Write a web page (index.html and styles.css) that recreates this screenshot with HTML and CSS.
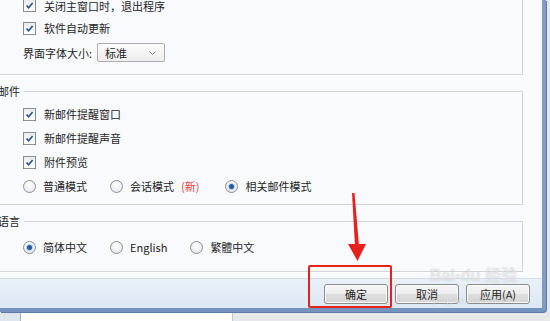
FILE: index.html
```html
<!DOCTYPE html>
<html lang="zh-CN">
<head>
    <meta charset="UTF-8">
    <title>设置</title>
    <link rel="stylesheet" href="styles.css">
</head>
<body>

    <div class="dialog">
        <div class="content">
            <!-- 常规 -->
            <div class="group group-top">
                <div class="row">
                    <span class="check"><svg viewBox="0 0 11 11"><path d="M2.5 5.5 L4.6 7.8 L8.6 3"/></svg></span>
                    <span>关闭主窗口时，退出程序</span>
                </div>
                <div class="row">
                    <span class="check"><svg viewBox="0 0 11 11"><path d="M2.5 5.5 L4.6 7.8 L8.6 3"/></svg></span>
                    <span>软件自动更新</span>
                </div>
                <div class="row row-select">
                    <span>界面字体大小:</span>
                    <span class="select">标准<svg viewBox="0 0 7 4"><path d="M0.5 0.5 L3.5 3.5 L6.5 0.5"/></svg></span>
                </div>
            </div>

            <!-- 邮件 -->
            <fieldset class="group group-mail">
                <legend>邮件</legend>
                <div class="row">
                    <span class="check"><svg viewBox="0 0 11 11"><path d="M2.5 5.5 L4.6 7.8 L8.6 3"/></svg></span>
                    <span>新邮件提醒窗口</span>
                </div>
                <div class="row">
                    <span class="check"><svg viewBox="0 0 11 11"><path d="M2.5 5.5 L4.6 7.8 L8.6 3"/></svg></span>
                    <span>新邮件提醒声音</span>
                </div>
                <div class="row">
                    <span class="check"><svg viewBox="0 0 11 11"><path d="M2.5 5.5 L4.6 7.8 L8.6 3"/></svg></span>
                    <span>附件预览</span>
                </div>
                <div class="row options">
                    <span class="opt"><span class="radio"></span>普通模式</span>
                    <span class="opt opt-wide"><span class="radio"></span>会话模式<span class="new">(新)</span></span>
                    <span class="opt"><span class="radio on"></span>相关邮件模式</span>
                </div>
            </fieldset>

            <!-- 语言 -->
            <fieldset class="group group-lang">
                <legend>语言</legend>
                <div class="row options">
                    <span class="opt"><span class="radio on"></span>简体中文</span>
                    <span class="opt"><span class="radio"></span>English</span>
                    <span class="opt"><span class="radio"></span>繁體中文</span>
                </div>
            </fieldset>
        </div>

        <div class="button-bar">
            <button class="btn">确定</button>
            <button class="btn">取消</button>
            <button class="btn">应用(A)</button>
        </div>

        <!-- 标注 -->
        <div class="callout"></div>
        <svg class="arrow" viewBox="0 0 30 80">
            <polygon points="12,8 14.5,8 19,61 15,61"/>
            <polygon points="8,59 26,59 17.5,76"/>
        </svg>
        <div class="watermark">
            <span class="wm-logo">Bai<span class="paw">●</span>du 经验</span>
            <span class="wm-url">jingyan.baidu.com</span>
        </div>
    </div>

    <div class="under">
        <span class="under-tab"></span>
        <span class="under-page"></span>
    </div>

</body>
</html>
```

FILE: styles.css
```css
body {
    margin: 0;
    background-color: #e7e8ea;
    font-family: "Noto Sans CJK SC", "Noto Sans", sans-serif;
    font-size: 11px;
    color: #1e1e1e;
    overflow: hidden;
    width: 550px;
    height: 321px;
}

.dialog {
    position: relative;
    width: 542px;
    height: 308px;
    display: flex;
    flex-direction: column;
    background-color: #f8fafe;
    border-right: 4px solid #7f9dc4;
    border-bottom: 4px solid #7494bc;
    border-bottom-right-radius: 4px;
    box-shadow: 1px 1px 0 #5c7aa3;
}

.content {
    flex: 1;
    padding-right: 19px;
}

.group {
    margin: 0 0 0 -12px;
    padding: 0 0 0 34px;
    border: 1px solid #d4d4d4;
    box-shadow: 0 1px 0 #ffffff;
    min-width: 0;
}

.group legend {
    padding: 0 4px;
    margin-left: -29px;
    line-height: 16px;
}

.group-top {
    margin-top: -6px;
    border-top: none;
    padding-bottom: 9px;
}

.group-mail {
    margin-top: 8px;
    padding-top: 3px;
    padding-bottom: 6px;
}

.group-lang {
    margin-top: 8px;
    padding-top: 6px;
    padding-bottom: 12px;
}

.row {
    display: flex;
    align-items: center;
    height: 24px;
}

.group-top .row {
    height: 22px;
}

.group-top .row:first-child {
    height: 23px;
}

.group-top .row-select {
    height: 25px;
    padding-top: 1px;
}

.check {
    width: 11px;
    height: 11px;
    border: 1px solid #8a8e94;
    background: linear-gradient(#e9ebee, #ffffff);
    margin-right: 8px;
    display: inline-flex;
}

.check svg {
    width: 11px;
    height: 11px;
    fill: none;
    stroke: #24518e;
    stroke-width: 1.6;
}

.select {
    display: inline-flex;
    align-items: center;
    justify-content: space-between;
    box-sizing: border-box;
    width: 68px;
    height: 19px;
    margin-left: 5px;
    padding: 0 8px 0 7px;
    border: 1px solid #adadad;
    border-radius: 2px;
    background: linear-gradient(#fbfbfb, #eeeeee);
}

.select svg {
    width: 7px;
    height: 4px;
    fill: none;
    stroke: #7a7a7a;
    stroke-width: 1;
}

.options {
    gap: 23px;
}

.opt {
    display: inline-flex;
    align-items: center;
}

.opt-wide {
    margin-right: 3px;
}

.radio {
    box-sizing: border-box;
    width: 13px;
    height: 13px;
    border: 1px solid #8b8f95;
    border-radius: 50%;
    background: radial-gradient(circle at 50% 35%, #ffffff, #e1e3e6);
    margin-right: 7px;
    display: inline-flex;
    align-items: center;
    justify-content: center;
}

.radio.on::after {
    content: "";
    width: 5px;
    height: 5px;
    border-radius: 50%;
    background-color: #2459a3;
    box-shadow: 0 0 0 1px #bcd3ee;
}

.new {
    color: #e24040;
    margin-left: 7px;
}

.button-bar {
    height: 29px;
    border-top: 1px solid #d8dde5;
    background: linear-gradient(#e9f0f9, #dde8f5);
    display: flex;
    align-items: center;
    justify-content: flex-end;
    gap: 7px;
    padding-right: 12px;
}

.btn {
    width: 64px;
    height: 20px;
    padding: 0;
    font-family: "Noto Sans CJK SC", "Noto Sans", sans-serif;
    font-size: 11px;
    color: #1e1e1e;
    border: 1px solid #8c8c8c;
    border-radius: 3px;
    background: linear-gradient(#f6f6f6 0%, #ececec 50%, #dedede 51%, #d6d6d6 100%);
    box-shadow: inset 0 0 0 1px #fbfbfb;
}

.callout {
    position: absolute;
    left: 308px;
    top: 265px;
    width: 80px;
    height: 39px;
    border: 2px solid #e8201c;
    border-radius: 2px;
}

.arrow {
    position: absolute;
    left: 340px;
    top: 185px;
    width: 30px;
    height: 80px;
    fill: #e8201c;
}

.watermark {
    position: absolute;
    left: 430px;
    top: 266px;
    display: flex;
    flex-direction: column;
    align-items: center;
    white-space: nowrap;
    color: rgba(255, 255, 255, 0.6);
    text-shadow: 0 0 1px rgba(110, 110, 110, 0.4);
    pointer-events: none;
}

.wm-logo {
    font-family: "Liberation Sans", "Noto Sans CJK SC", sans-serif;
    font-size: 16px;
    font-weight: bold;
    line-height: 20px;
}

.paw {
    font-size: 10px;
    vertical-align: top;
}

.wm-url {
    font-family: "Liberation Sans", sans-serif;
    font-size: 9px;
    line-height: 11px;
    margin-top: 9px;
    letter-spacing: 0.5px;
}

.under {
    display: flex;
    height: 9px;
}

.under-tab {
    width: 20px;
    background-color: #dfe6ee;
    border-right: 1px solid #a9b1bb;
}

.under-page {
    width: 211px;
    background-color: #ffffff;
    border-right: 1px solid #c9c9c9;
}
```
